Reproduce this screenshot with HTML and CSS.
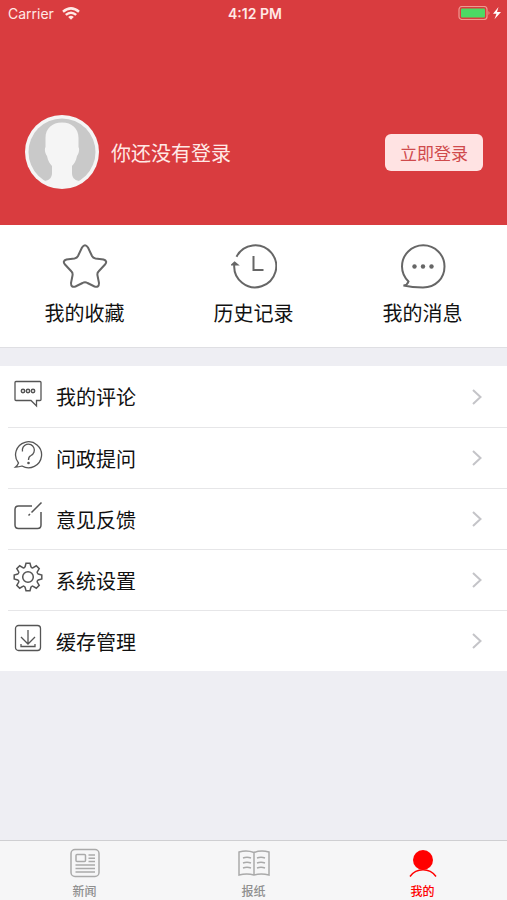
FILE: index.html
```html
<!DOCTYPE html>
<html lang="zh-CN">
<head>
<meta charset="utf-8">
<meta name="viewport" content="width=device-width, initial-scale=1">
<title>我的</title>
<link rel="stylesheet" href="styles.css">
</head>
<body>
<div class="app">
  <header class="hero">
    <div class="status">
      <div class="carrier">
        <span>Carrier</span>
        <svg width="18" height="13" viewBox="0 0 18 13" fill="none" stroke="currentColor" stroke-width="2.5"><path d="M1 4.800Q9-2 17 4.800M3.800 7.900Q9 3.500 14.200 7.900"/><path d="M6.200 10Q9 7.600 11.800 10L9 12.800z" fill="currentColor" stroke="none"/></svg>
      </div>
      <span class="time">4:12 PM</span>
      <div class="power">
        <svg width="44" height="14" viewBox="0 0 44 14"><rect x="1" y=".5" width="28" height="13" rx="3" fill="none" stroke="#ee9a90" stroke-width="1.2"/><rect x="3" y="2.5" width="24" height="9" rx="1" fill="#4cd964"/><path d="M30.500 5q2 2 0 4z" fill="#ee9a90"/><path d="M40.500 1 35 7.800h3.500L36.500 13.200l6.500-7.200h-4z" fill="#fff"/></svg>
      </div>
    </div>
    <div class="profile">
      <svg class="avatar" width="74" height="74" viewBox="0 0 74 74"><circle cx="37" cy="37" r="37" fill="#f5f5f5"/><circle cx="37" cy="37" r="33.500" fill="#c9c9c9"/><path d="M37 7.500c-10 0-16.500 6-16.500 15.500v9c-1.500 3 0 7 1.500 9 1 5 3 8 5 10v7c0 4-2 7-7 8q17 12 34 0c-5-1-7-4-7-8v-7c2-2 4-5 5-10 1.500-2 3-6 1.500-9v-9C53.500 13.500 47 7.500 37 7.500z" fill="#f5f5f5"/></svg>
      <p class="greeting">你还没有登录</p>
      <button class="login" type="button">立即登录</button>
    </div>
  </header>

  <nav class="quick">
    <a href="#favorites">
      <svg width="46" height="46" viewBox="0 0 46 46"><path d="M20 4.500Q23 0 26 4.500L30 13Q31 15 33.500 15.500L41.500 16.500Q46 18 43 21.500L36.500 28.500Q35 30 35.500 32.500L37 40Q37 45 32.500 43.500L25.500 40Q23 38.500 20.500 40L13.500 43.500Q9 45 9 40L10.500 32.500Q11 30 9.500 28.500L3 21.500Q0 18 4.500 16.500L12.500 15.500Q15 15 16 13z"/></svg>
      <span>我的收藏</span>
    </a>
    <a href="#history">
      <svg width="46" height="46" viewBox="0 0 46 46"><path d="M6 14.500A21 21 0 1 1 3.200 22.500" stroke="none"/><path d="M5.500 13.800A21 21 0 1 1 3.300 21.500M22.500 13v14H32.500"/><path d="M1.500 21.500h4.500L3.600 19.500z" fill="currentColor"/></svg>
      <span>历史记录</span>
    </a>
    <a href="#messages">
      <svg width="46" height="46" viewBox="0 0 46 46"><path d="M8.500 38.500C4.500 34.500 2 29 2 23.500A21.200 21.200 0 0 1 44.500 23.500C44.500 35 36 44.500 23 44.500Q12 44.500 3.500 42.500Q7.500 42 8.500 38.500z"/><g fill="currentColor" stroke="none"><circle cx="14.500" cy="23.500" r="2.200"/><circle cx="23" cy="23.500" r="2.200"/><circle cx="31.500" cy="23.500" r="2.200"/></g></svg>
      <span>我的消息</span>
    </a>
  </nav>

  <ul class="menu">
    <li><a href="#comments">
      <svg class="icon" width="30" height="30" viewBox="0 0 30 30"><path d="M3 2.500h24q1 0 1 1v17q0 1-1 1H23.500v5.500l-5.500-5.500H3q-1 0-1-1v-17q0-1 1-1z"/><g stroke-width="1.500"><circle cx="10" cy="12" r="1.700"/><circle cx="15" cy="12" r="1.700"/><circle cx="20" cy="12" r="1.700"/></g></svg>
      <span>我的评论</span>
      <svg class="chevron" width="12" height="18" viewBox="0 0 12 18"><path d="m2 2 7.500 7L2 16"/></svg>
    </a></li>
    <li><a href="#questions">
      <svg class="icon" width="30" height="30" viewBox="0 0 30 30"><path d="M5.500 23A13 13 0 1 1 9 26Q6 27 2.500 27Q4.500 25.500 5.500 23z"/><path d="M9.500 11.500A6 6 0 1 1 18 15.500Q15.500 16.500 15.500 20"/><circle cx="15.500" cy="23" r="1.300" fill="currentColor" stroke="none"/></svg>
      <span>问政提问</span>
      <svg class="chevron" width="12" height="18" viewBox="0 0 12 18"><path d="m2 2 7.500 7L2 16"/></svg>
    </a></li>
    <li><a href="#feedback">
      <svg class="icon" width="30" height="30" viewBox="0 0 30 30"><path d="M19 5H5.500Q2 5 2 8.500v15.500Q2 27.500 5.500 27.500h19Q28 27.500 28 24V11M28.500 1.500l-10 10M17 13l-1.500 1.500" stroke-width="1.500"/></svg>
      <span>意见反馈</span>
      <svg class="chevron" width="12" height="18" viewBox="0 0 12 18"><path d="m2 2 7.500 7L2 16"/></svg>
    </a></li>
    <li><a href="#settings">
      <svg class="icon" width="30" height="30" viewBox="-15 -15 30 30"><path d="M-2.900-10.300-2-13.800H2L2.900-10.300Q4.300-8.600 5.200-9.300L8.300-11.200 11.200-8.300 9.300-5.200Q8.600-4.300 10.300-2.900L13.800-2V2L10.300 2.900Q8.600 4.300 9.300 5.200L11.200 8.300 8.300 11.200 5.200 9.300Q4.300 8.600 2.900 10.300L2 13.800H-2L-2.900 10.300Q-4.300 8.600-5.200 9.300L-8.300 11.200-11.200 8.300-9.300 5.200Q-8.600 4.300-10.300 2.900L-13.800 2V-2L-10.300-2.900Q-8.600-4.300-9.300-5.200L-11.200-8.300-8.300-11.200-5.200-9.300Q-4.300-8.600-2.900-10.300z" stroke-width="1.500"/><circle r="5.300" stroke-width="1.500"/></svg>
      <span>系统设置</span>
      <svg class="chevron" width="12" height="18" viewBox="0 0 12 18"><path d="m2 2 7.500 7L2 16"/></svg>
    </a></li>
    <li><a href="#cache">
      <svg class="icon" width="30" height="30" viewBox="0 0 30 30"><rect x="2.500" y="2.500" width="25" height="25" rx="3"/><path d="M15 7v13.500M8 14l7 7 7-7M8 21v2.500h14V21"/></svg>
      <span>缓存管理</span>
      <svg class="chevron" width="12" height="18" viewBox="0 0 12 18"><path d="m2 2 7.500 7L2 16"/></svg>
    </a></li>
  </ul>

  <nav class="tabs">
    <a href="#news">
      <svg width="32" height="32" viewBox="0 0 32 32"><rect x="2" y="2.500" width="28" height="27" rx="4"/><rect x="7" y="7.500" width="9.500" height="7" rx="1"/><path d="M19.500 8H26M19.500 11.200H26M19.500 14.500H26M6.500 18H26M6.500 21.500H26M6.500 25H26"/></svg>
      <span>新闻</span>
    </a>
    <a href="#paper">
      <svg width="32" height="32" viewBox="0 0 32 32"><path d="M16 5.500Q9 2.800 1 5V28Q9 25.800 16 28Q23 25.800 31 28V5Q23 2.800 16 5.500zM16 5.500V28M5 11Q9 9.500 13 11M5 16Q9 14.500 13 16M5 21Q9 19.500 13 21M19 11Q23 9.500 27 11M19 16Q23 14.500 27 16M19 21Q23 19.500 27 21"/></svg>
      <span>报纸</span>
    </a>
    <a class="active" href="#me" aria-current="page">
      <svg width="32" height="32" viewBox="0 0 32 32"><circle cx="16" cy="13" r="10" fill="currentColor" stroke="none"/><path d="M3 29.500Q8 22.800 16 22.800T29 29.500"/></svg>
      <span>我的</span>
    </a>
  </nav>
</div>
</body>
</html>
```
FILE: styles.css
```css
* {
  box-sizing: border-box;
}

body {
  margin: 0;
  background: #eeeef3;
  color: #111;
  font-family: Inter, "Noto Sans CJK SC", sans-serif;
  font-size: 20px;
}

a {
  color: inherit;
  text-decoration: none;
}

svg {
  display: block;
  flex: none;
}

.app {
  display: flex;
  flex-direction: column;
  min-height: 100vh;
}

.hero {
  padding-bottom: 36px;
  background: #d93c3f;
  color: #fff;
}

.status {
  display: grid;
  grid-template-columns: 1fr auto 1fr;
  align-items: center;
  height: 26px;
  padding: 0 5px 0 8px;
  color: #ffe9e6;
  font-size: 14px;
}

.carrier {
  display: flex;
  align-items: center;
  gap: 8px;
}

.time {
  font-weight: 600;
}

.power {
  justify-self: end;
}

.profile {
  display: flex;
  align-items: center;
  gap: 12px;
  padding: 89px 24px 0 25px;
}

.greeting {
  flex: 1;
  margin: 0;
  color: #ffe9e6;
}

.login {
  height: 37px;
  padding: 0 15px;
  border: 0;
  border-radius: 6px;
  background: #ffe3e3;
  color: #cf4a4c;
  font: inherit;
  font-size: 17px;
}

.quick {
  display: grid;
  grid-template-columns: repeat(3, 1fr);
  padding: 18px 0;
  border-bottom: 1px solid #dfdfe3;
  background: #fff;
}

.quick a {
  display: flex;
  flex-direction: column;
  align-items: center;
  gap: 10px;
  line-height: 30px;
}

.quick svg {
  fill: none;
  stroke: currentColor;
  stroke-width: 2;
  color: #666;
}

.menu {
  margin: 18px 0 0;
  padding: 0 0 0 8px;
  background: #fff;
  list-style: none;
}

.menu li + li {
  border-top: 1px solid #e6e6e8;
}

.menu a {
  display: flex;
  align-items: center;
  gap: 13px;
  height: 60px;
  padding: 0 24px 0 5px;
}

.menu li:first-child a {
  height: 61px;
}

.menu span {
  flex: 1;
}

.icon {
  margin-bottom: 6px;
  fill: none;
  stroke: currentColor;
  stroke-width: 1.3;
  color: #555;
}

.chevron {
  fill: none;
  stroke: #c4c4c8;
  stroke-width: 2;
}

.tabs {
  display: grid;
  grid-template-columns: repeat(3, 1fr);
  height: 60px;
  margin-top: auto;
  padding-top: 6px;
  border-top: 1px solid #cfcfd2;
  background: #f6f6f7;
  color: #8f8f8f;
  font-size: 12px;
  font-weight: 500;
  line-height: 18px;
}

.tabs a {
  display: flex;
  flex-direction: column;
  align-items: center;
  gap: 4px;
}

.tabs svg {
  fill: none;
  stroke: currentColor;
  stroke-width: 1.5;
}

.tabs a:not(.active) svg {
  color: #aaa;
}

.tabs .active {
  color: #f00;
}
```
